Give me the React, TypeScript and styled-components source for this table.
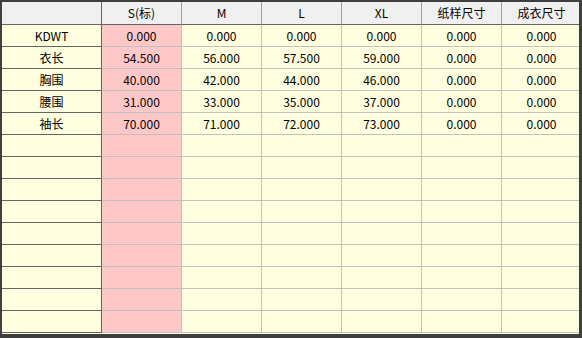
import React from 'react';
import styled, { createGlobalStyle } from 'styled-components';

const sizes = ['S(标)', 'M', 'L', 'XL', '纸样尺寸', '成衣尺寸'];

const rows: { name: string, values: string[] }[] = [
  { name: 'KDWT', values: ['0.000', '0.000', '0.000', '0.000', '0.000', '0.000'] },
  { name: '衣长', values: ['54.500', '56.000', '57.500', '59.000', '0.000', '0.000'] },
  { name: '胸围', values: ['40.000', '42.000', '44.000', '46.000', '0.000', '0.000'] },
  { name: '腰围', values: ['31.000', '33.000', '35.000', '37.000', '0.000', '0.000'] },
  { name: '袖长', values: ['70.000', '71.000', '72.000', '73.000', '0.000', '0.000'] },
];

const EMPTY_ROWS = 9;

const GlobalStyle = createGlobalStyle`
  html, body {
    margin: 0;
    padding: 0;
    background: #3f3f3f;
    font-family: "Noto Sans CJK SC", "Noto Sans", sans-serif;
  }
`;

const App: React.FC = () => {
  const filled = [
    ...rows,
    ...Array.from({ length: EMPTY_ROWS }, () => ({ name: '', values: ['', '', '', '', '', ''] })),
  ];

  return (
    <>
      <GlobalStyle />
      <Frame>
        <Viewport>
          <Grid>
            <thead>
              <tr>
                <Corner />
                {sizes.map((s) => (
                  <HeadCell key={s}>{s}</HeadCell>
                ))}
              </tr>
            </thead>
            <tbody>
              {filled.map((r, i) => (
                <tr key={i}>
                  <RowHead>{r.name}</RowHead>
                  {r.values.map((v, j) => (
                    <Cell key={j} $base={j === 0}>{v}</Cell>
                  ))}
                </tr>
              ))}
            </tbody>
          </Grid>
        </Viewport>
      </Frame>
    </>
  );
};

export default App;

const Frame = styled.div`
  width: 582px;
  height: 338px;
  padding: 2px 0 0 2px;
  box-sizing: border-box;
  background: #3f3f3f;
`;

const Viewport = styled.div`
  width: 577px;
  height: 332px;
  overflow: hidden;
  background: #ffffe0;
`;

const Grid = styled.table`
  border-collapse: separate;
  border-spacing: 0;
  table-layout: fixed;
  width: 580px;
  font-size: 12px;
  color: #000;

  td, th {
    padding: 0;
    text-align: center;
    font-weight: normal;
    white-space: nowrap;
    overflow: hidden;
    box-sizing: border-box;
    line-height: 16px;
  }
`;

const Corner = styled.th`
  width: 100px;
  height: 23px;
  background: #f0f0f0;
  border-right: 1px solid #646464;
  border-bottom: 1px solid #646464;
`;

const HeadCell = styled.th`
  width: 80px;
  height: 23px;
  background: #f0f0f0;
  border-right: 1px solid #a0a0a0;
  border-bottom: 1px solid #646464;
`;

const RowHead = styled.td`
  height: 22px;
  background: #ffffe0;
  border-right: 1px solid #646464;
  border-bottom: 1px solid #646464;
`;

const Cell = styled.td<{ $base: boolean }>`
  height: 22px;
  background: ${(p) => (p.$base ? '#ffc8c8' : '#ffffe0')};
  border-right: 1px solid #c0c0c0;
  border-bottom: 1px solid #c0c0c0;
`;
